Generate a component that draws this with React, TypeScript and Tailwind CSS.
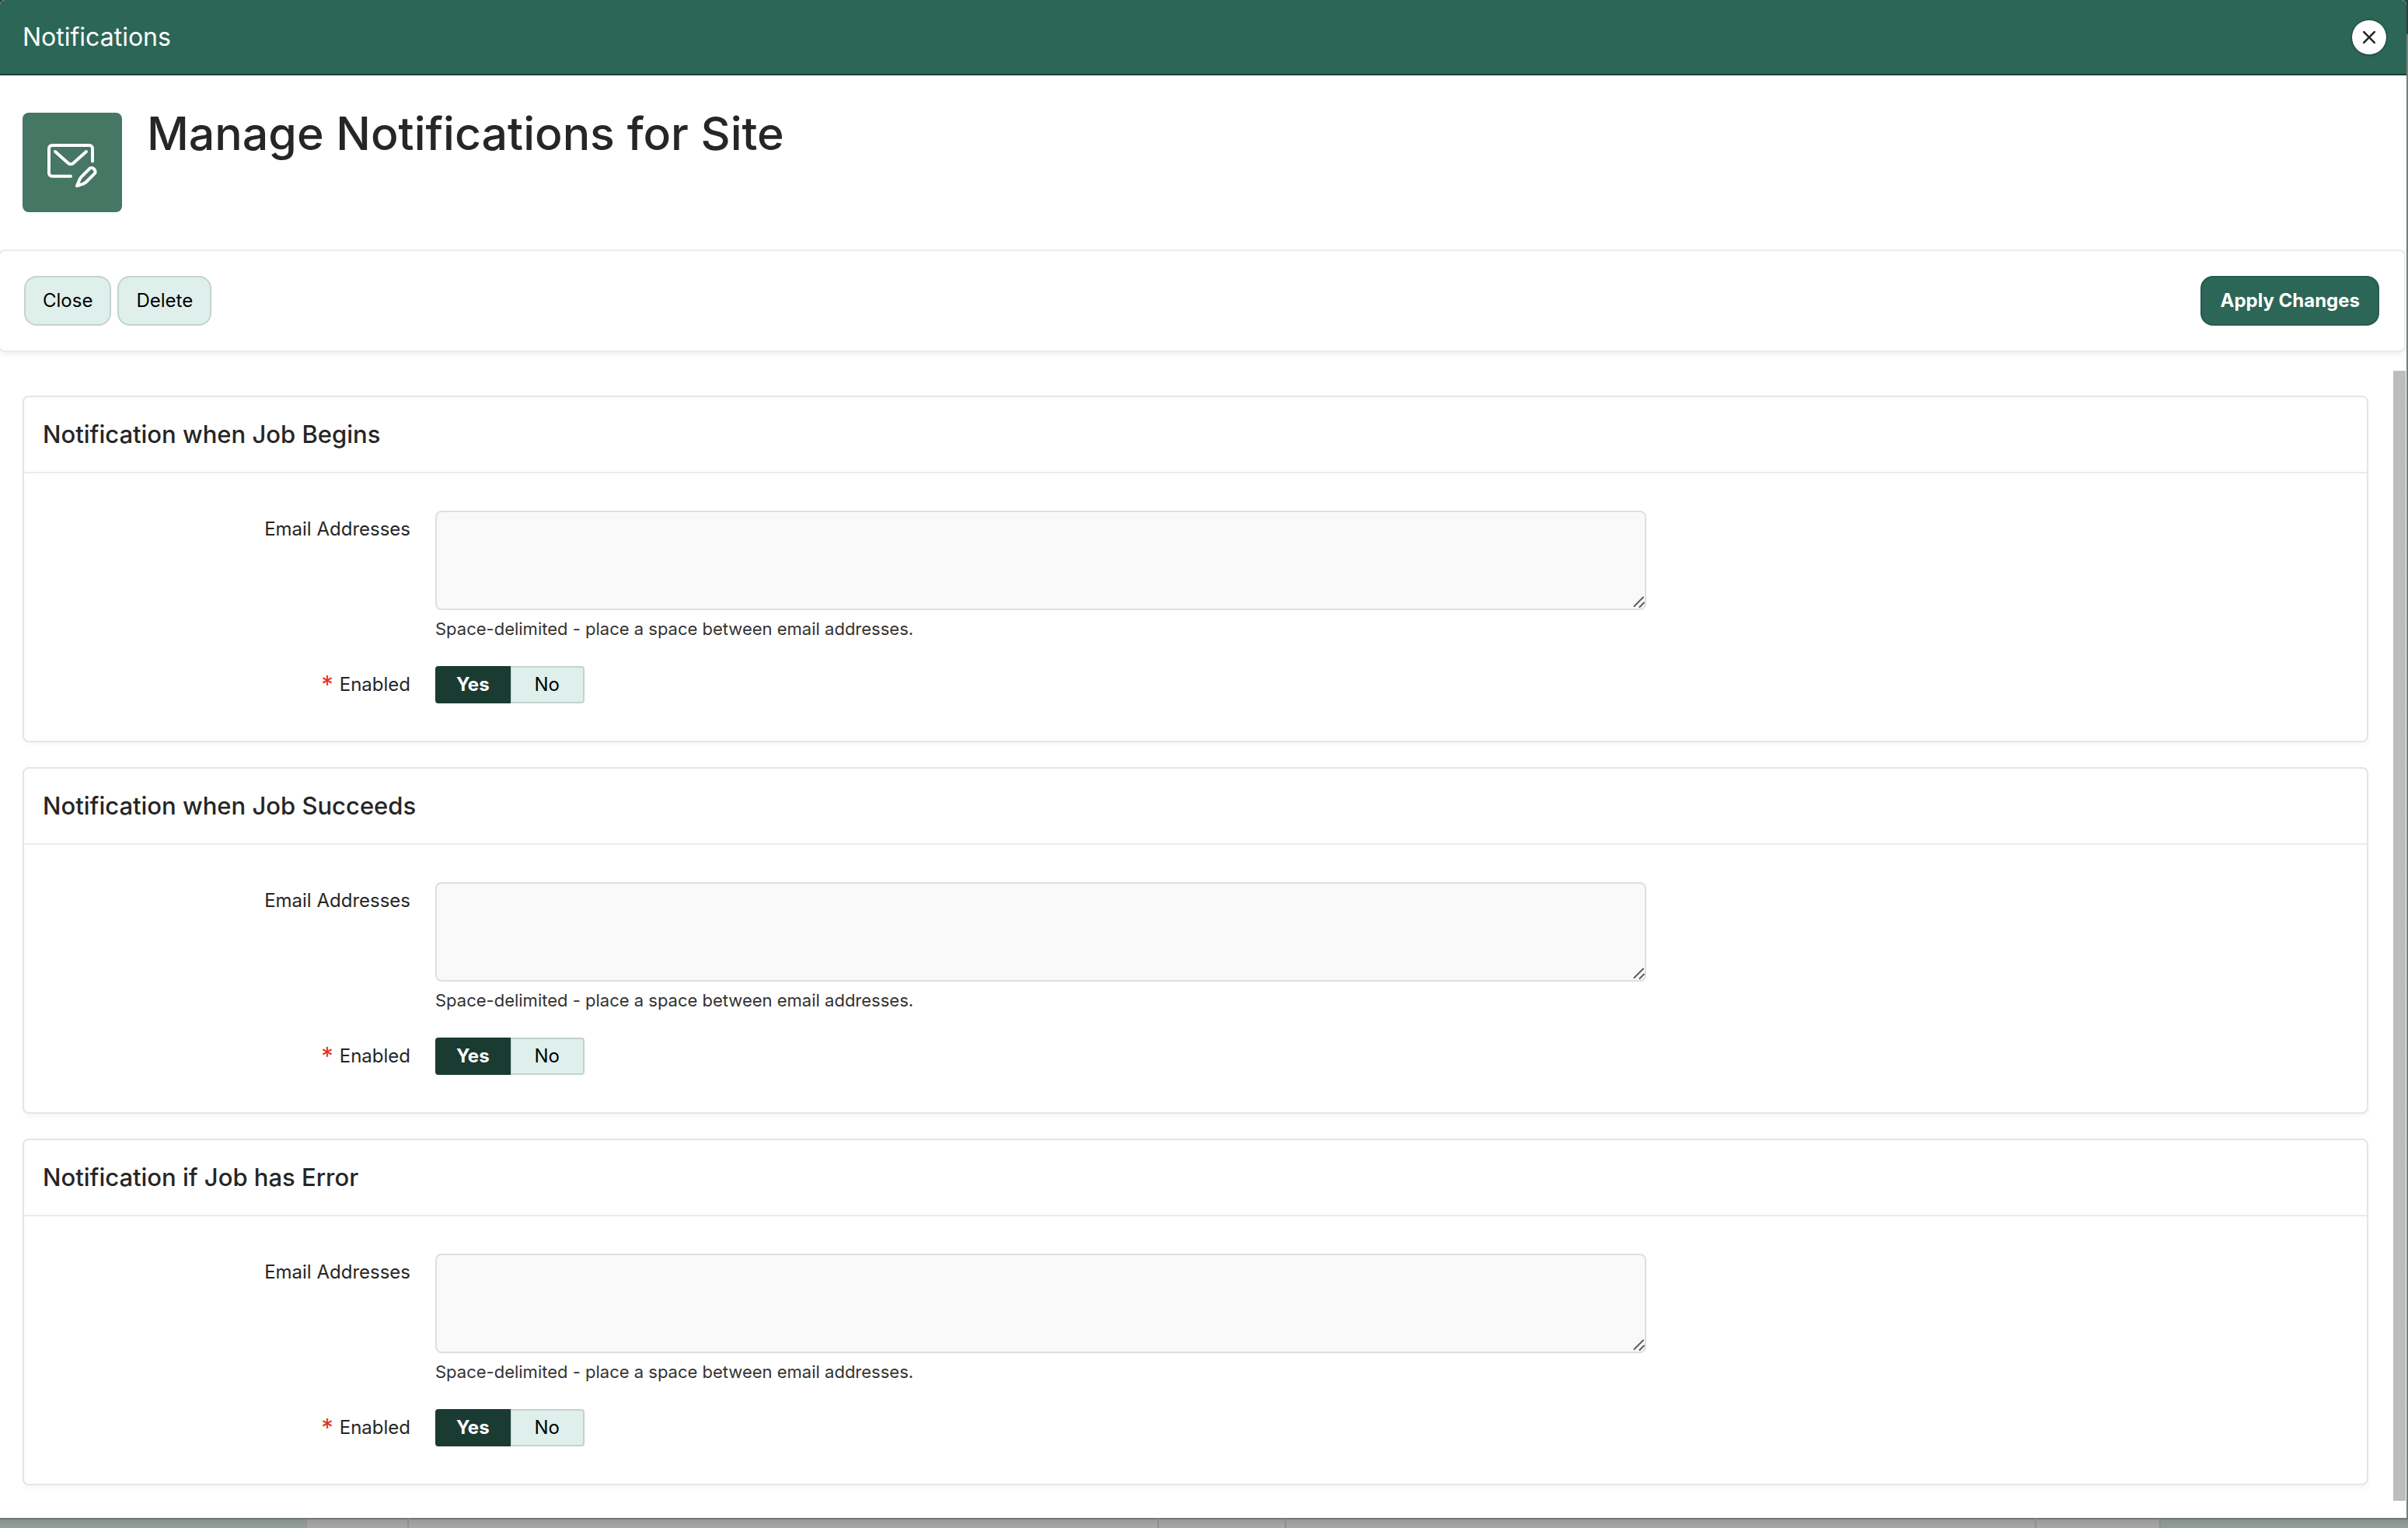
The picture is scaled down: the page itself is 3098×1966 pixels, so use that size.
import React, { useState } from "react";

const SECTIONS = [
  { id: "begins", title: "Notification when Job Begins" },
  { id: "succeeds", title: "Notification when Job Succeeds" },
  { id: "error", title: "Notification if Job has Error" },
];

function MailEditIcon() {
  return (
    <svg
      viewBox="5 -1 64 64"
      className="size-16"
      fill="none"
      stroke="white"
      strokeWidth="4"
      strokeLinecap="round"
      strokeLinejoin="round"
      aria-hidden="true"
    >
      <path d="M63 29.5V13a4 4 0 0 0-4-4H11a4 4 0 0 0-4 4v31.7a4 4 0 0 0 4 4h24" />
      <path d="M15 17l16.5 14.8a5.2 5.2 0 0 0 7 0L55 17" />
      <path d="M43 61.3l3.4-8.2a10 10 0 0 1 2.2-3.4L59.6 38.6a4.8 4.8 0 0 1 6.3 6.6L55 56a10 10 0 0 1-3.6 2.3z" />
    </svg>
  );
}

function ResizeGrip() {
  return (
    <svg
      viewBox="0 0 16 16"
      className="pointer-events-none absolute right-0.5 bottom-0.5 size-4"
      fill="none"
      stroke="#5c5c5c"
      strokeWidth="2"
      strokeLinecap="round"
      aria-hidden="true"
    >
      <path d="M2.5 13L14 1.5M9.5 14L15 8.5" />
    </svg>
  );
}

function Header() {
  return (
    <header className="flex h-[97px] items-center justify-between rounded-t-md border-b-2 border-[#183c32] bg-[#2b6656] pr-[25px] pl-[29px]">
      <span className="text-[32px] leading-10 text-white">Notifications</span>
      <button
        type="button"
        aria-label="Close dialog"
        className="flex size-[46px] items-center justify-center rounded-full border border-[#183c32] bg-white shadow-sm"
      >
        <svg viewBox="0 0 16 16" className="size-4" stroke="#262626" strokeWidth="2.6" strokeLinecap="round" aria-hidden="true">
          <path d="M1.2 1.2l13.6 13.6M14.8 1.2L1.2 14.8" />
        </svg>
      </button>
    </header>
  );
}

function Toolbar() {
  return (
    <div className="mr-px -ml-0.5 flex justify-between rounded-lg border-2 border-[#ebebeb] bg-white py-8 pr-8 pl-[31px] text-2xl leading-8 shadow-[0_4px_8px_-2px_rgba(0,0,0,0.08)]">
      <div className="flex gap-2">
        <button type="button" className="h-16 rounded-2xl border-2 border-[#c3d3ce] bg-[#dfefeb] px-[22px] text-black">
          Close
        </button>
        <button type="button" className="h-16 rounded-2xl border-2 border-[#c3d3ce] bg-[#dfefeb] px-[22px] text-black">
          Delete
        </button>
      </div>
      <button type="button" className="h-16 rounded-2xl border-2 border-[#265b4d] bg-[#2b6656] px-[23px] font-bold text-white">
        Apply Changes
      </button>
    </div>
  );
}

function Toggle({ name }: { name: string }) {
  const [value, setValue] = useState("Yes");
  return (
    <div role="radiogroup" aria-labelledby={name + "-label"} className="flex w-48">
      {["Yes", "No"].map((option) => (
        <label
          key={option}
          className="flex h-12 flex-1 cursor-pointer items-center justify-center border-2 border-[#c3d3ce] bg-[#dfefeb] text-black first:rounded-l last:rounded-r last:border-l has-checked:border-[#1a3b32] has-checked:bg-[#1a3b32] has-checked:font-bold has-checked:text-white"
        >
          <input
            type="radio"
            name={name}
            value={option}
            checked={value === option}
            onChange={() => setValue(option)}
            className="sr-only"
          />
          {option}
        </label>
      ))}
    </div>
  );
}

function NotificationCard({ id, title }: { id: string; title: string }) {
  return (
    <section className="rounded-lg border-2 border-[#e5e5e5] bg-white shadow-[0_4px_8px_-2px_rgba(0,0,0,0.05)]">
      <h2 className="border-b-2 border-[#ebebeb] px-6 py-7 text-[31px] leading-10 font-medium">{title}</h2>
      <div className="grid grid-cols-12 gap-y-8 px-4 py-12 text-2xl leading-8">
        <label htmlFor={id + "-emails"} className="col-span-2 pt-2 pr-4 text-right">
          Email Addresses
        </label>
        <div className="col-span-10 pl-4">
          <div className="relative w-[1558px] max-w-full">
            <textarea
              id={id + "-emails"}
              aria-describedby={id + "-help"}
              className="block h-32 w-full resize-none rounded-lg border-2 border-[#dfdfdf] bg-[#f9f9f9] px-4 py-3 outline-none"
            />
            <ResizeGrip />
          </div>
          <p id={id + "-help"} className="mt-2 text-[22px] leading-8 text-[#333333]">
            Space-delimited - place a space between email addresses.
          </p>
        </div>
        <div id={id + "-enabled-label"} className="col-span-2 flex items-center justify-end gap-2 pr-4">
          <span className="text-[31px] text-[#e03426]">*</span>
          <span>Enabled</span>
        </div>
        <div className="col-span-10 pl-4">
          <Toggle name={id + "-enabled"} />
        </div>
      </div>
    </section>
  );
}

function PageBehind() {
  const side = "border-t-2 border-t-[#6d7875] bg-linear-to-b from-[#879290] to-[#939e9b]";
  const cell = "border-t-2 border-t-[#767676] bg-linear-to-b from-[#999999] to-[#a8a8a8]";
  return (
    <div aria-hidden="true" className="flex h-[13px]">
      <div className={side + " flex-[396]"} />
      <div className={cell + " flex-[130] border-r-2 border-r-[#909090]"} />
      <div className={cell + " flex-[966] border-r-2 border-r-[#909090]"} />
      <div className={cell + " flex-[162] border-r-2 border-r-[#909090]"} />
      <div className={cell + " flex-[966] border-r-2 border-r-[#909090]"} />
      <div className={cell + " flex-[159]"} />
      <div className={side + " flex-[319] border-l-2 border-l-[#84908c]"} />
    </div>
  );
}

export default function App() {
  return (
    <div className="flex min-h-screen flex-col bg-linear-to-b from-[#24433b] from-[44px] to-[#76807d] to-[44px] font-[Inter,'Liberation_Sans',sans-serif] text-[#262626]">
      <div role="dialog" aria-label="Notifications" className="mr-0.5 flex flex-1 flex-col overflow-hidden rounded-t-md bg-white">
        <Header />
        <div className="flex gap-8 px-[29px] py-12">
          <div className="flex size-32 shrink-0 items-center justify-center rounded-lg bg-[#467664]">
            <MailEditIcon />
          </div>
          <h1 className="text-[59px] leading-[54px] font-medium">Manage Notifications for Site</h1>
        </div>
        <Toolbar />
        <main className="flex flex-1 pr-px">
          <div className="flex flex-1 flex-col gap-8 pt-14 pr-8 pb-[42px] pl-[29px]">
            {SECTIONS.map((section) => (
              <NotificationCard key={section.id} id={section.id} title={section.title} />
            ))}
          </div>
          <div aria-hidden="true" className="mt-6 mb-[22px] w-4 bg-[#bdbdbd]" />
        </main>
      </div>
      <PageBehind />
    </div>
  );
}
